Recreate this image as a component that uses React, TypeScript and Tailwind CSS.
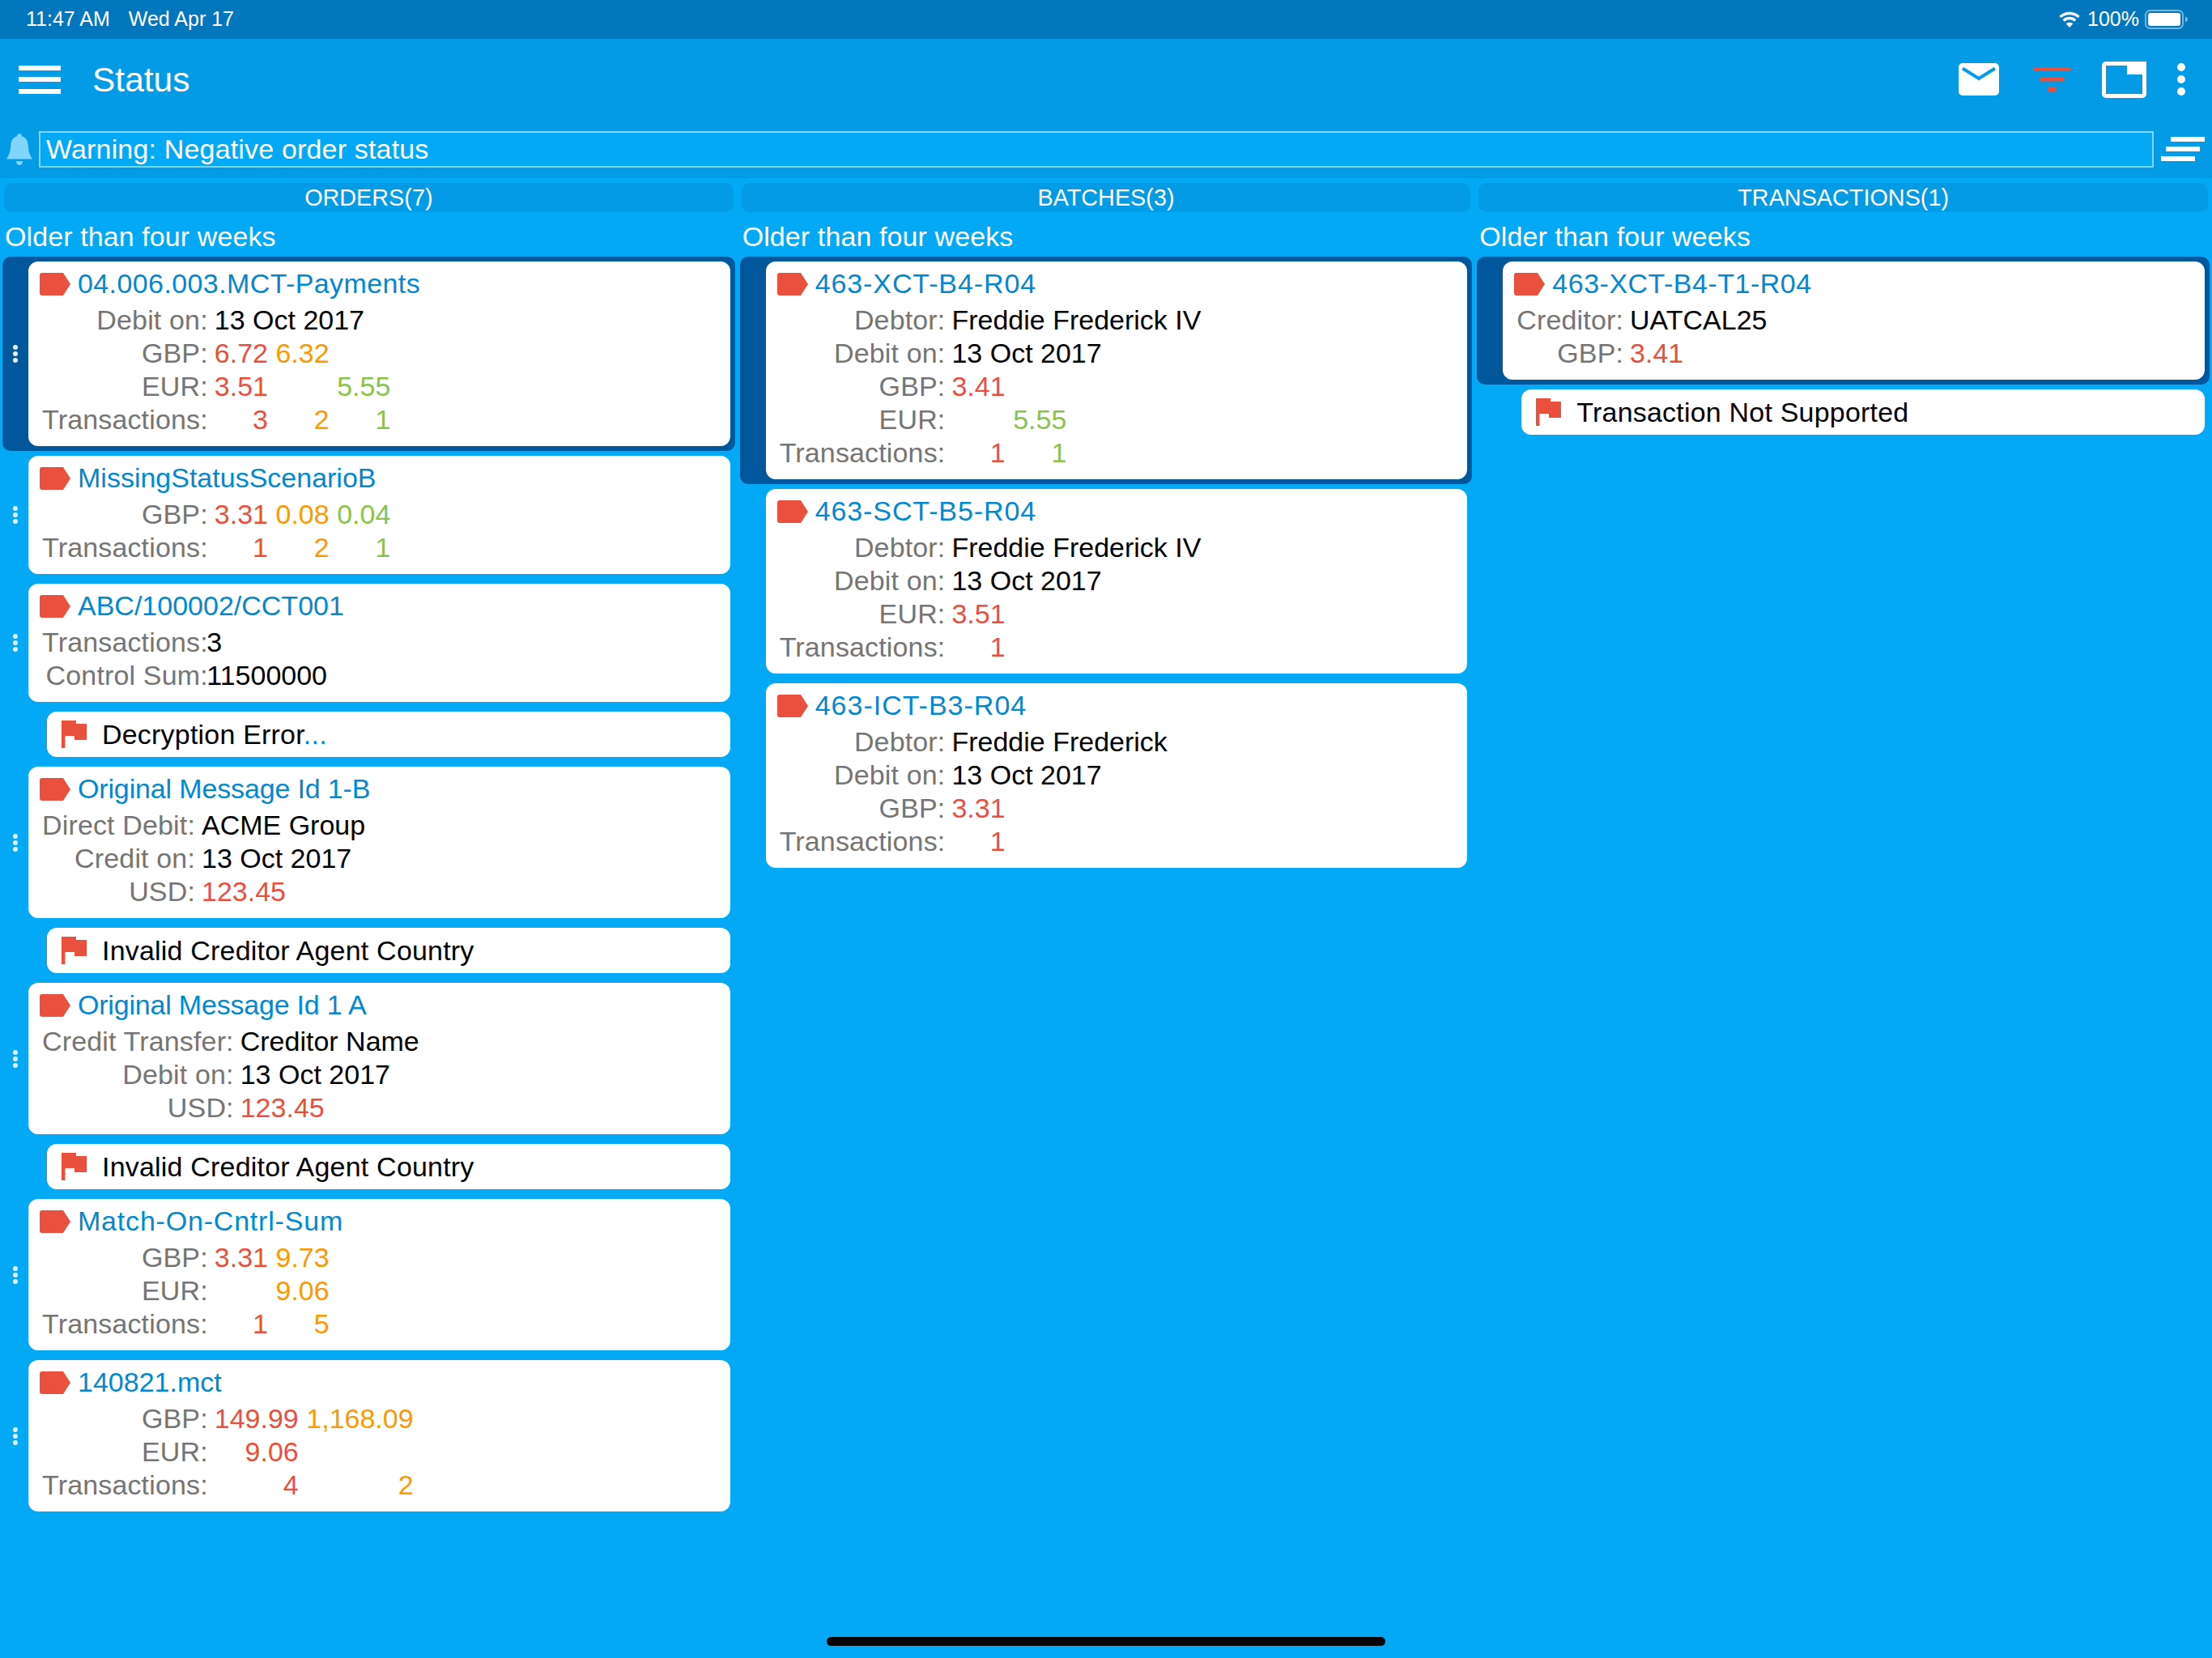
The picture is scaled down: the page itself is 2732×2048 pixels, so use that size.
import { Fragment } from "react";

type Color = "red" | "orange" | "green";

type Line = {
  label: string;
  text?: string;
  // one slot per number column, null leaves the slot empty
  vals?: (string | null)[];
};

type CardData = {
  title: string;
  titleClass?: string;
  lines: Line[];
  cols?: Color[];
  tight?: boolean;
  selected?: boolean;
  flag?: React.ReactNode;
};

const colorClass: Record<Color, string> = {
  red: "text-[#ea4f3e]",
  orange: "text-[#ff9800]",
  green: "text-[#8bc34a]",
};

const orders: CardData[] = [
  {
    title: "04.006.003.MCT-Payments",
    titleClass: "tracking-[0.4px]",
    selected: true,
    cols: ["red", "orange", "green"],
    lines: [
      { label: "Debit on:", text: "13 Oct 2017" },
      { label: "GBP:", vals: ["6.72", "6.32", null] },
      { label: "EUR:", vals: ["3.51", null, "5.55"] },
      { label: "Transactions:", vals: ["3", "2", "1"] },
    ],
  },
  {
    title: "MissingStatusScenarioB",
    cols: ["red", "orange", "green"],
    lines: [
      { label: "GBP:", vals: ["3.31", "0.08", "0.04"] },
      { label: "Transactions:", vals: ["1", "2", "1"] },
    ],
  },
  {
    title: "ABC/100002/CCT001",
    tight: true,
    lines: [
      { label: "Transactions:", text: "3" },
      { label: "Control Sum:", text: "11500000" },
    ],
    flag: (
      <>
        Decryption Error<span className="text-[#0288d1]">...</span>
      </>
    ),
  },
  {
    title: "Original Message Id 1-B",
    titleClass: "tracking-[-0.15px]",
    cols: ["red"],
    lines: [
      { label: "Direct Debit:", text: "ACME Group" },
      { label: "Credit on:", text: "13 Oct 2017" },
      { label: "USD:", vals: ["123.45"] },
    ],
    flag: "Invalid Creditor Agent Country",
  },
  {
    title: "Original Message Id 1 A",
    titleClass: "tracking-[-0.2px]",
    cols: ["red"],
    lines: [
      { label: "Credit Transfer:", text: "Creditor Name" },
      { label: "Debit on:", text: "13 Oct 2017" },
      { label: "USD:", vals: ["123.45"] },
    ],
    flag: "Invalid Creditor Agent Country",
  },
  {
    title: "Match-On-Cntrl-Sum",
    titleClass: "tracking-[0.8px]",
    cols: ["red", "orange"],
    lines: [
      { label: "GBP:", vals: ["3.31", "9.73"] },
      { label: "EUR:", vals: [null, "9.06"] },
      { label: "Transactions:", vals: ["1", "5"] },
    ],
  },
  {
    title: "140821.mct",
    cols: ["red", "orange"],
    lines: [
      { label: "GBP:", vals: ["149.99", "1,168.09"] },
      { label: "EUR:", vals: ["9.06", null] },
      { label: "Transactions:", vals: ["4", "2"] },
    ],
  },
];

const batches: CardData[] = [
  {
    title: "463-XCT-B4-R04",
    titleClass: "tracking-[0.9px]",
    selected: true,
    cols: ["red", "green"],
    lines: [
      { label: "Debtor:", text: "Freddie Frederick IV" },
      { label: "Debit on:", text: "13 Oct 2017" },
      { label: "GBP:", vals: ["3.41", null] },
      { label: "EUR:", vals: [null, "5.55"] },
      { label: "Transactions:", vals: ["1", "1"] },
    ],
  },
  {
    title: "463-SCT-B5-R04",
    titleClass: "tracking-[0.9px]",
    cols: ["red"],
    lines: [
      { label: "Debtor:", text: "Freddie Frederick IV" },
      { label: "Debit on:", text: "13 Oct 2017" },
      { label: "EUR:", vals: ["3.51"] },
      { label: "Transactions:", vals: ["1"] },
    ],
  },
  {
    title: "463-ICT-B3-R04",
    titleClass: "tracking-[1px]",
    cols: ["red"],
    lines: [
      { label: "Debtor:", text: "Freddie Frederick" },
      { label: "Debit on:", text: "13 Oct 2017" },
      { label: "GBP:", vals: ["3.31"] },
      { label: "Transactions:", vals: ["1"] },
    ],
  },
];

const transactions: CardData[] = [
  {
    title: "463-XCT-B4-T1-R04",
    titleClass: "tracking-[0.5px]",
    selected: true,
    cols: ["red"],
    lines: [
      { label: "Creditor:", text: "UATCAL25" },
      { label: "GBP:", vals: ["3.41"] },
    ],
    flag: "Transaction Not Supported",
  },
];

function Tag() {
  return (
    <svg width="38" height="28" viewBox="0 0 38 28" className="shrink-0">
      <path d="M3 0H29L38 14L29 28H3A3 3 0 0 1 0 25V3A3 3 0 0 1 3 0Z" fill="#ea503e" />
    </svg>
  );
}

function Flag() {
  return (
    <svg width="31" height="34" viewBox="0 0 31 34" className="shrink-0">
      <path d="M0 0H18V4H31V24H16V19H4.5V34H0Z" fill="#ea503e" />
    </svg>
  );
}

function Dots({ show }: { show: boolean }) {
  return (
    <div className="flex w-[32px] shrink-0 flex-col items-center gap-[2px]">
      {show && (
        <>
          <div className="h-[6px] w-[6px] rounded-full bg-[#e1f5fe]" />
          <div className="h-[6px] w-[6px] rounded-full bg-[#e1f5fe]" />
          <div className="h-[6px] w-[6px] rounded-full bg-[#e1f5fe]" />
        </>
      )}
    </div>
  );
}

function Card({ card, handle }: { card: CardData; handle: boolean }) {
  const count = card.cols?.length ?? 1;
  return (
    <>
      <div className={`flex items-center rounded-[10px] py-[6px] pr-[6px] ${card.selected ? "bg-[#01579b]" : ""}`}>
        <Dots show={handle} />
        <div className="min-w-0 flex-1 rounded-[12px] bg-white pt-[7px] pb-[12px] pl-[14px]">
          <div className="flex h-[45px] items-start gap-[9px]">
            <div className="pt-[7px]">
              <Tag />
            </div>
            <span className={`text-[34px] leading-[41px] text-[#0288d1] ${card.titleClass ?? ""}`}>{card.title}</span>
          </div>
          <div
            className={`grid w-fit pl-[3px] text-[34px] leading-[41px] whitespace-nowrap ${
              card.tight ? "gap-x-0" : "gap-x-[9.5px]"
            } ${
              count === 3
                ? "grid-cols-[auto_auto_auto_auto]"
                : count === 2
                  ? "grid-cols-[auto_auto_auto]"
                  : "grid-cols-[auto_auto]"
            }`}
          >
            {card.lines.map((line) => (
              <Fragment key={line.label}>
                <span className="-mr-[1.5px] justify-self-end tracking-[0.15px] text-[#757575]">{line.label}</span>
                {line.text !== undefined && <span className="col-[2/-1] w-0 text-black">{line.text}</span>}
                {line.vals?.map((val, i) => (
                  <span key={i} className={`text-right ${colorClass[card.cols?.[i] ?? "red"]}`}>
                    {val}
                  </span>
                ))}
              </Fragment>
            ))}
          </div>
        </div>
      </div>
      {card.flag && (
        <div className="py-[6px] pr-[6px] pl-[55px]">
          <div className="flex h-[56px] items-center gap-[19px] rounded-[12px] bg-white pl-[18px] text-[34px] tracking-[0.2px] text-black">
            <Flag />
            <span>{card.flag}</span>
          </div>
        </div>
      )}
    </>
  );
}

function Column({ cards, handle = false }: { cards: CardData[]; handle?: boolean }) {
  return (
    <div className="min-w-0">
      <div className="h-[55px] pt-[6px] pl-[3px] text-[34px] leading-[48px] tracking-[0.1px] text-white">
        Older than four weeks
      </div>
      {cards.map((card) => (
        <Card key={card.title} card={card} handle={handle} />
      ))}
    </div>
  );
}

function Toolbar() {
  return (
    <div className="flex h-[100px] items-center pr-[33px] pl-[23px] text-white">
      <div className="flex w-[52px] flex-col gap-[8.5px]">
        <div className="h-[6px] bg-white" />
        <div className="h-[6px] bg-white" />
        <div className="h-[6px] bg-white" />
      </div>
      <span className="mt-[2px] ml-[39px] text-[42.5px]">Status</span>
      <div className="ml-auto flex items-center">
        <svg width="50" height="40" viewBox="0 0 50 40">
          <rect width="50" height="40" rx="5" fill="#fff" />
          <path d="M5 6.5L25 19L45 6.5" fill="none" stroke="#039be5" strokeWidth="4" />
        </svg>
        <svg width="46" height="30" viewBox="0 0 46 30" className="ml-[42px]">
          <rect x="0" y="0" width="46" height="5" fill="#ea503e" />
          <rect x="8" y="12.5" width="30" height="5" fill="#ea503e" />
          <rect x="18" y="25" width="10" height="5" fill="#ea503e" />
        </svg>
        <svg width="55" height="45" viewBox="0 0 55 45" className="ml-[39px]">
          <rect x="2.5" y="2.5" width="50" height="40" rx="2.5" fill="none" stroke="#fff" strokeWidth="5" />
          <rect x="31" y="0" width="24" height="16" fill="#fff" />
        </svg>
        <div className="ml-[38px] flex flex-col gap-[5px]">
          <div className="h-[10px] w-[10px] rounded-full bg-white" />
          <div className="h-[10px] w-[10px] rounded-full bg-white" />
          <div className="h-[10px] w-[10px] rounded-full bg-white" />
        </div>
      </div>
    </div>
  );
}

export default function App() {
  return (
    <div
      className="flex h-[2048px] w-[2732px] flex-col overflow-hidden bg-[#03a9f4]"
      style={{ fontFamily: '"Liberation Sans", Arial, sans-serif' }}
    >
      <div className="flex h-[48px] items-center bg-[#0277bd] pr-[30px] pl-[32px] text-[25px] text-white">
        <span>11:47 AM</span>
        <span className="ml-[23px]">Wed Apr 17</span>
        <div className="ml-auto flex items-center">
          <svg width="26" height="20" viewBox="0 0 26 20" fill="none" stroke="#fff" strokeWidth="3.4">
            <path d="M1.5 7C8 1 18 1 24.5 7" />
            <path d="M5.8 11.4C10 7.6 16 7.6 20.2 11.4" />
            <path d="M13 20L8.7 15.3C11.2 13.3 14.8 13.3 17.3 15.3Z" fill="#fff" stroke="none" />
          </svg>
          <span className="ml-[9px]">100%</span>
          <svg width="53" height="24" viewBox="0 0 53 24" className="ml-[7px]">
            <rect x="1" y="1" width="46" height="22" rx="5.5" fill="none" stroke="#fff" strokeOpacity="0.45" strokeWidth="2" />
            <rect x="4" y="4" width="40" height="16" rx="3" fill="#fff" />
            <path d="M50 8.5C52 9.5 53 10.5 53 12C53 13.5 52 14.5 50 15.5Z" fill="#fff" fillOpacity="0.5" />
          </svg>
        </div>
      </div>

      <div className="bg-[#039be5]">
        <Toolbar />
        <div className="flex h-[72px] items-start pt-[14px] pr-[9px] pl-[8px]">
          <svg width="32" height="39" viewBox="0 0 32 39" className="mt-[3px] shrink-0">
            <path
              d="M16 0C18 0 19 1.3 19 3.3C24.5 5 26.5 9.5 26.8 15C27.2 22 28.5 26 32 31.5H0C3.5 26 4.8 22 5.2 15C5.5 9.5 7.5 5 13 3.3C13 1.3 14 0 16 0Z"
              fill="#81d4fa"
            />
            <path d="M12 34H20C20 37 18.5 39 16 39C13.5 39 12 37 12 34Z" fill="#81d4fa" />
          </svg>
          <div className="ml-[8px] flex h-[45px] flex-1 items-center border-2 border-[#81d4fa] bg-[#03a9f4] pl-[7px] text-[34px] tracking-[0.17px] text-white">
            Warning: Negative order status
          </div>
          <div className="mt-[7px] ml-[9px] flex w-[54px] shrink-0 flex-col gap-[6px]">
            <div className="ml-[12px] h-[6px] w-[42px] bg-white" />
            <div className="ml-[6px] h-[6px] w-[42px] bg-white" />
            <div className="h-[6px] w-[42px] bg-white" />
          </div>
        </div>
      </div>

      <div className="grid grid-cols-3 gap-x-[6px] px-[3px] pt-[6px]">
        {["ORDERS(7)", "BATCHES(3)", "TRANSACTIONS(1)"].map((tab) => (
          <div
            key={tab}
            className="mx-[2px] h-[36px] rounded-[10px] bg-[#039be5] text-center text-[28.8px] leading-[36px] text-white"
          >
            {tab}
          </div>
        ))}
      </div>

      <div className="grid flex-1 grid-cols-3 items-start gap-x-[6px] px-[3px]">
        <Column cards={orders} handle />
        <Column cards={batches} />
        <Column cards={transactions} />
      </div>

      <div className="flex justify-center pb-[15px]">
        <div className="h-[11px] w-[690px] rounded-full bg-[#050505]" />
      </div>
    </div>
  );
}
